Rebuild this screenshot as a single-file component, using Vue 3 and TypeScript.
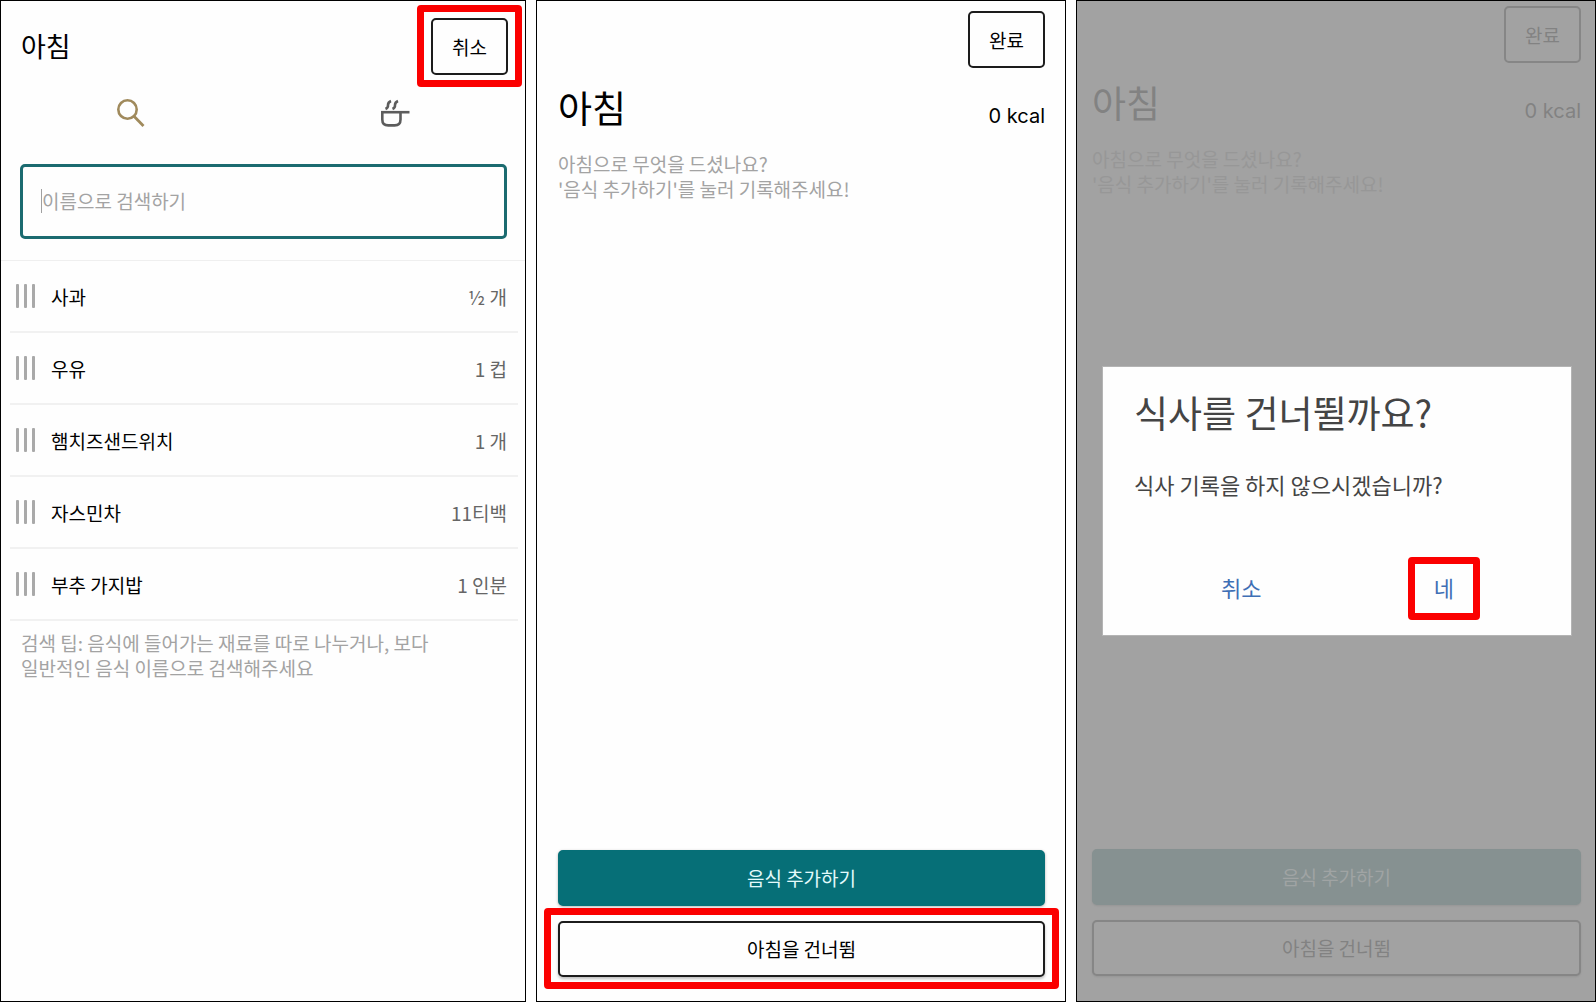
<script setup lang="ts">
import { ref } from 'vue'

interface Food {
  name: string
  amount: string
}

const query = ref('')

const foods: Food[] = [
  { name: '사과', amount: '½ 개' },
  { name: '우유', amount: '1 컵' },
  { name: '햄치즈샌드위치', amount: '1 개' },
  { name: '자스민차', amount: '11티백' },
  { name: '부추 가지밥', amount: '1 인분' },
]
</script>

<template>
  <div class="board">
    <section class="panel search-panel">
      <header class="search-header">
        <h1 class="search-title">아침</h1>
        <button type="button" class="btn btn-small ringed">취소</button>
      </header>

      <nav class="tabs">
        <button type="button" class="tab tab-active" aria-label="검색">
          <svg width="30" height="30" viewBox="0 0 30 30" fill="none" stroke="currentColor">
            <circle cx="10.500" cy="11.500" r="9.200" stroke-width="2.6" />
            <path d="M17 18.300L26.500 28" stroke-width="2.8" />
          </svg>
        </button>
        <button type="button" class="tab" aria-label="요리">
          <svg width="28" height="30" viewBox="0 0 28 30" fill="none" stroke="currentColor" stroke-width="2.6" overflow="visible">
            <path d="M1 14.200H29.500" />
            <path d="M2.300 14.200V21.500Q2.300 27.400 8.200 27.400H14.600Q20.500 27.400 20.500 21.500V14.200" />
            <path d="M5.500 11Q8.300 9.800 8 7Q8 4.200 11 3" />
            <path d="M12.500 11Q15.300 9.800 15 7Q15 4.200 18 3" />
          </svg>
        </button>
      </nav>

      <label class="search-box">
        <span class="caret"></span>
        <input v-model="query" type="text" class="search-input" placeholder="이름으로 검색하기" aria-label="이름으로 검색하기" />
      </label>

      <ul class="foods">
        <li v-for="food in foods" :key="food.name" class="food">
          <span class="grip"><i></i><i></i><i></i></span>
          <span class="food-name">{{ food.name }}</span>
          <span class="food-amount">{{ food.amount }}</span>
        </li>
      </ul>

      <p class="hint tip">검색 팁: 음식에 들어가는 재료를 따로 나누거나, 보다 일반적인 음식 이름으로 검색해주세요</p>
    </section>

    <section class="panel meal-panel">
      <button type="button" class="btn btn-small">완료</button>
      <div class="meal-head">
        <h2 class="meal-title">아침</h2>
        <span class="kcal">0 kcal</span>
      </div>
      <p class="hint">아침으로 무엇을 드셨나요?<br />'음식 추가하기'를 눌러 기록해주세요!</p>
      <footer class="actions">
        <button type="button" class="btn btn-primary">음식 추가하기</button>
        <button type="button" class="btn btn-raised ringed">아침을 건너뜀</button>
      </footer>
    </section>

    <section class="panel meal-panel dimmed">
      <button type="button" class="btn btn-small">완료</button>
      <div class="meal-head">
        <h2 class="meal-title">아침</h2>
        <span class="kcal">0 kcal</span>
      </div>
      <p class="hint">아침으로 무엇을 드셨나요?<br />'음식 추가하기'를 눌러 기록해주세요!</p>
      <footer class="actions">
        <button type="button" class="btn btn-primary">음식 추가하기</button>
        <button type="button" class="btn btn-raised">아침을 건너뜀</button>
      </footer>

      <div class="overlay">
        <div class="dialog" role="dialog" aria-labelledby="skip-title">
          <h2 id="skip-title" class="dialog-title">식사를 건너뛸까요?</h2>
          <p class="dialog-text">식사 기록을 하지 않으시겠습니까?</p>
          <div class="dialog-actions">
            <button type="button" class="link-btn">취소</button>
            <button type="button" class="link-btn ringed">네</button>
          </div>
        </div>
      </div>
    </section>
  </div>
</template>

<style>
body {
  margin: 0;
  background: #fff;
}
</style>

<style scoped>
.board {
  display: grid;
  grid-template-columns: 526fr 530fr 520fr;
  gap: 10px;
  min-height: 100vh;
  font-family: "Noto Sans CJK KR", sans-serif;
  font-size: 19px;
  line-height: 25px;
  color: #000;
}

.board *,
.board *::after {
  box-sizing: border-box;
}

h1,
h2,
p,
ul {
  margin: 0;
  padding: 0;
  font-weight: 400;
}

button,
input {
  font: inherit;
  color: inherit;
}

.panel {
  position: relative;
  display: flex;
  flex-direction: column;
  box-sizing: border-box;
  min-width: 0;
  border: 1px solid #000;
  background: #fefefe;
}

.btn {
  position: relative;
  height: 56px;
  padding: 0 0 1px;
  border: 2px solid #1c1c1c;
  border-radius: 5px;
  background: #fefefe;
}

.btn-small {
  width: 77px;
  height: 57px;
}

.ringed {
  position: relative;
}

.ringed::after {
  content: "";
  position: absolute;
  inset: -15px -16px -14px;
  border: 7px solid #fb0000;
  border-radius: 4px;
}

.search-header {
  display: flex;
  align-items: center;
  justify-content: space-between;
  padding: 17px 17px 0 20px;
}

.search-title {
  padding-bottom: 2px;
  font-size: 27px;
  line-height: 40px;
}

.tabs {
  display: flex;
  margin-top: 23px;
}

.tab {
  flex: 1;
  display: flex;
  justify-content: center;
  padding: 0;
  border: 0;
  background: none;
  color: #5c5c5c;
}

.tab-active {
  color: #a08a5c;
}

.search-box {
  display: flex;
  align-items: center;
  height: 75px;
  margin: 36px 18px 21px 19px;
  padding: 0 18px 2px;
  border: 3px solid #1b6b70;
  border-radius: 5px;
}

.caret {
  width: 1px;
  height: 24px;
  background: #a0a0a0;
}

.search-input {
  flex: 1;
  min-width: 0;
  padding: 0;
  border: 0;
  outline: 0;
  background: none;
}

.search-input::placeholder {
  color: #a3a3a3;
  opacity: 1;
}

.foods {
  padding: 0 7px 0 9px;
  border-top: 1px solid #efefef;
  list-style: none;
}

.food {
  display: flex;
  align-items: center;
  height: 72px;
  padding: 0 11px 0 6px;
  border-bottom: 2px solid #f1f1f1;
}

.grip {
  display: flex;
  gap: 5px;
  margin-right: 16px;
}

.grip i {
  width: 3px;
  height: 24px;
  border-radius: 1px;
  background: #a9a9a9;
}

.food-name {
  flex: 1;
}

.food-amount {
  color: #666;
}

.hint {
  color: #a3a3a3;
}

.tip {
  max-width: 450px;
  padding: 9px 20px;
}

.meal-panel {
  padding: 10px 20px 24px 21px;
}

.meal-panel > .btn-small {
  align-self: flex-end;
}

.meal-head {
  display: flex;
  align-items: baseline;
  justify-content: space-between;
  margin: 13px 0 18px;
}

.meal-title {
  font-size: 37px;
  line-height: 52px;
}

.kcal {
  font-family: Inter, sans-serif;
  font-size: 20px;
}

.actions {
  display: flex;
  flex-direction: column;
  gap: 15px;
  margin-top: auto;
}

.btn-primary {
  border-color: #066f77;
  background: #066f77;
  color: #e4fbfc;
  box-shadow: 0 1px 3px rgba(0, 0, 0, 0.3);
}

.btn-raised {
  box-shadow: 0 2px 3px rgba(0, 0, 0, 0.25);
}

.dimmed {
  padding: 5px 14px 25px 15px;
  background: #a2a2a2;
  color: #828282;
}

.dimmed .btn {
  border-color: #868686;
  background: #a2a2a2;
}

.dimmed .btn-raised {
  box-shadow: 0 1px 2px rgba(0, 0, 0, 0.08);
}

.dimmed .btn-primary {
  border-color: #869191;
  background: #869191;
  color: #a0a4a4;
  box-shadow: 0 1px 2px rgba(0, 0, 0, 0.08);
}

.dimmed .hint {
  color: #979797;
}

.overlay {
  position: absolute;
  inset: 0;
  display: flex;
  align-items: center;
  padding: 0 23px 0 25px;
}

.dialog {
  flex: 1;
  min-height: 270px;
  padding: 18px 22px 28px 31px;
  border: 1px solid #b4b4b4;
  background: #fefefe;
  color: #444;
}

.dialog-title {
  font-size: 37px;
  line-height: 54px;
}

.dialog-text {
  margin-top: 28px;
  font-size: 22px;
  line-height: 34px;
}

.dialog-actions {
  display: grid;
  grid-template-columns: 1fr 1fr;
  justify-items: center;
  margin-top: 69px;
  padding: 0 4px 0 6px;
}

.link-btn {
  width: 44px;
  height: 37px;
  padding: 0 0 2px;
  border: 0;
  background: none;
  color: #3f6fb5;
  font-size: 22px;
  white-space: nowrap;
}

.link-btn.ringed::after {
  inset: -13px -14px;
}
</style>
